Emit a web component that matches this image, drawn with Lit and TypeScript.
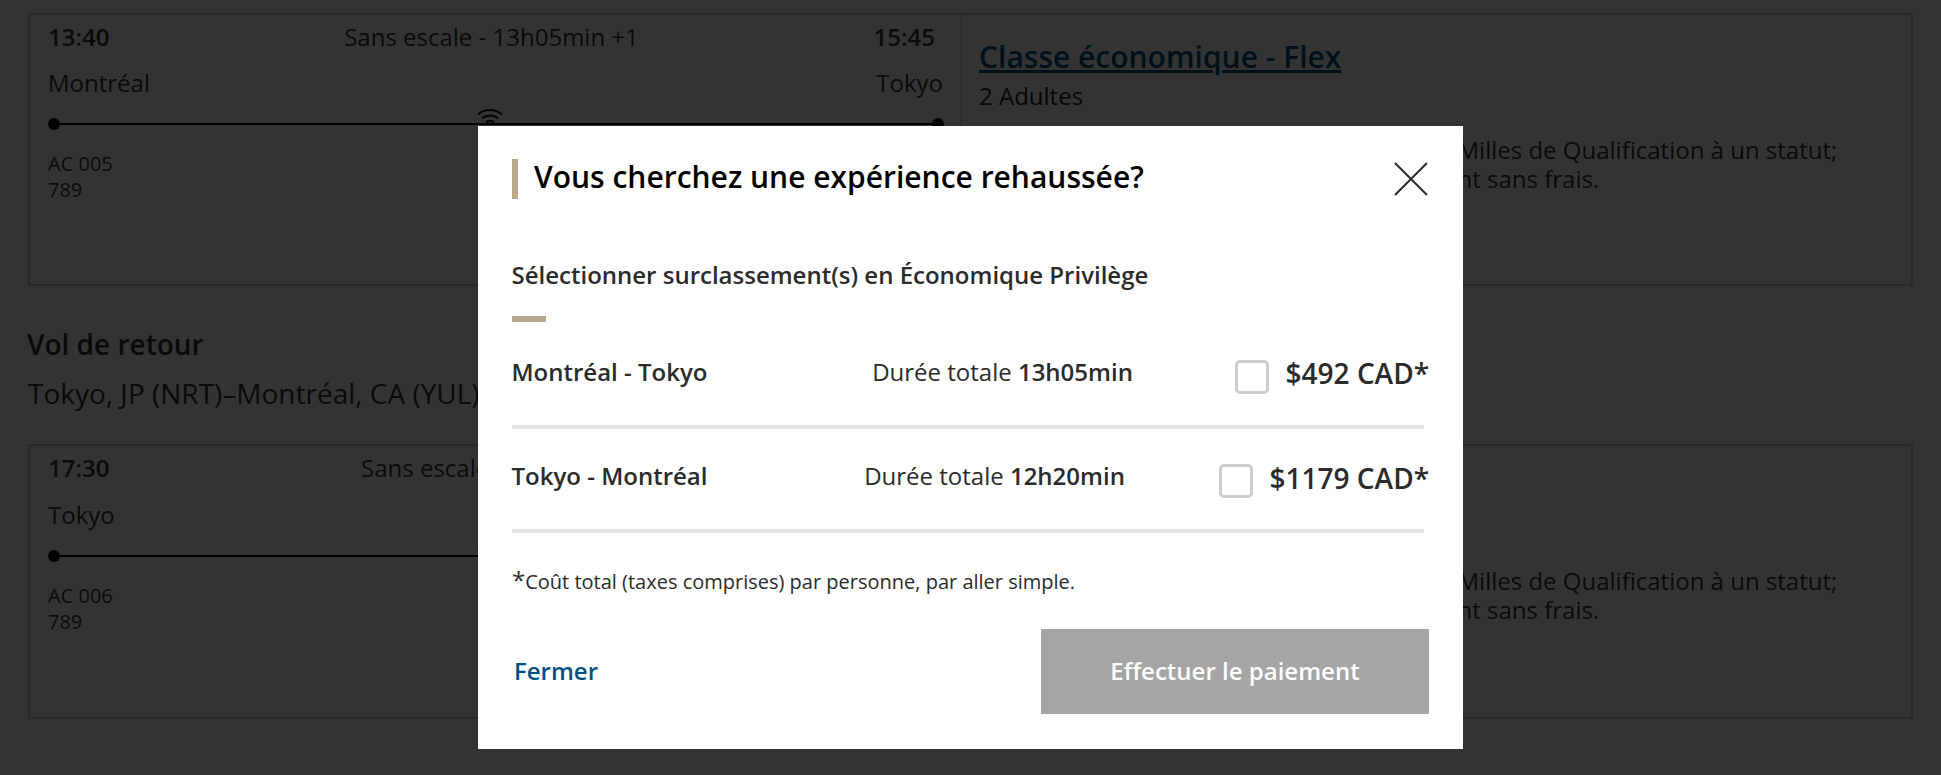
import { LitElement, html, css, svg } from "lit";
import { customElement } from "lit/decorators.js";

const wifi = svg`<svg class="wifi" viewBox="0 0 26 16" width="26" height="16" fill="none" stroke="#0d0d0d" stroke-width="2"><path d="M1 6.5C7.5 .5 18.5 .5 25 6.5"/><path d="M5 10.5C9.5 6.5 16.5 6.5 21 10.5"/><path d="M9 14.5C11.5 12.5 14.5 12.5 17 14.5"/></svg>`;

@customElement("app-root")
export class AppRoot extends LitElement {
  static styles = css`
    :host { display: block; position: relative; height: 775px; overflow: hidden; background: #fff; color: #333;
      font-family: "Open Sans", "Liberation Sans", sans-serif; }
    * { box-sizing: border-box; }
    .page { padding: 13px 28px 0; }
    .card { display: grid; grid-template-columns: 932px 1fr; height: 273px; border: 2px solid #ccc; }
    .card.later { height: 275px; }
    .flight { padding: 7px 17px 0 18px; border-right: 2px solid #ddd; }
    .top { display: grid; grid-template-columns: 1fr auto 1fr; font-size: 24px; line-height: 30px; padding-right: 8px; }
    .top b { font-weight: 600; }
    .top .dep { text-align: left; }
    .top .arr { text-align: right; }
    .cities { display: flex; justify-content: space-between; font-size: 24px; line-height: 30px; margin-top: 16px; }
    .later .cities { margin-top: 17px; }
    .track { position: relative; height: 2px; background: #000; margin: 25px 5px 0 6px; }
    .dot { position: absolute; top: -5px; width: 12px; height: 12px; border-radius: 50%; background: #000; }
    .dot.l { left: -6px; } .dot.r { right: -6px; }
    .wifi { position: absolute; left: 423px; top: -15px; }
    .num { font-size: 20px; line-height: 26px; margin-top: 26px; }
    .fare { padding: 22px 16px 0 17px; }
    .fare a { display: block; font-size: 30px; line-height: 40px; font-weight: 600; color: #00507f; text-decoration: underline; }
    .fare .pax { font-size: 24px; line-height: 32px; color: #222; margin-top: 3px; }
    .perks { font-size: 24px; line-height: 29px; margin-top: 23px; white-space: nowrap; }
    .perks span { display: inline-block; text-align: right; }
    .perks .a { width: 478.5px; }
    .perks .b { width: 478.5px; }
    h2 { font-size: 28px; line-height: 36px; font-weight: 600; margin: 40px 0 0 -1px; color: #333; }
    .route { font-size: 28px; line-height: 38px; margin: 12px 0 32px; }
    .overlay { position: absolute; inset: 0; background: rgba(0,0,0,.8); display: flex; justify-content: center; align-items: flex-start; padding-top: 126px; }
    .modal { width: 985px; height: 623px; background: #fff; padding: 33px 35px 0 34px; color: #2b2b2b; }
    .head { display: flex; justify-content: space-between; align-items: center; height: 40px; }
    .head h1 { margin: 0; height: 40px; font-size: 30px; line-height: 36px; font-weight: 600; color: #000; border-left: 6px solid #b9a88f; padding: 0 0 4px 16px; white-space: nowrap; }
    .close { display: block; width: 34px; height: 34px; background: none; border: 0; padding: 0; }
    .sub { font-size: 24px; line-height: 34px; font-weight: 600; margin: 59px 0 0 -0.5px; }
    .rule { width: 34px; height: 6px; background: #b9a88f; margin-top: 24px; }
    .row { display: flex; align-items: center; border-bottom: 4px solid #e5e5e5; margin-right: 4px; height: 104px; padding-bottom: 7px; }
    .first { height: 107px; padding-bottom: 4px; }
    .name { width: 259px; font-size: 24px; font-weight: 600; margin-left: -0.5px; }
    .dur { flex: 1; text-align: center; font-size: 24px; }
    .dur b { font-weight: 600; }
    .pick { display: flex; align-items: center; gap: 17px; margin-right: -5px; }
    .box { width: 34px; height: 34px; border: 3px solid #ccc; border-radius: 5px; background: #fff; margin-top: 10px; }
    .price { font-size: 28px; font-weight: 600; margin-top: 2px; }
    .row:not(.first) .price { margin-top: 4px; }
    .note { font-size: 20px; line-height: 30px; margin: 34px 0 0; }
    .note i { font-style: normal; font-size: 24px; line-height: 20px; }
    .foot { display: flex; justify-content: space-between; align-items: center; margin-top: 32px; }
    .foot a { font-size: 24px; font-weight: 600; color: #00507f; margin: -2px 0 0 2px; }
    .pay { width: 388px; height: 85px; border: 0; padding: 0 0 2px; background: #a5a5a5; color: #fff; font: 600 24px "Open Sans", sans-serif; margin-right: -1px; }
  `;

  private card(t1: string, mid: string, t2: string, from: string, to: string, num: string, later = false) {
    return html`<section class="card ${later ? "later" : ""}">
      <div class="flight">
        <div class="top"><b class="dep">${t1}</b><span>${mid}</span><b class="arr">${t2}</b></div>
        <div class="cities"><span>${from}</span><span>${to}</span></div>
        <div class="track"><i class="dot l"></i>${wifi}<i class="dot r"></i></div>
        <div class="num">${num}<br />789</div>
      </div>
      <div class="fare">
        <a href="#">Classe économique - Flex</a>
        <div class="pax">2 Adultes</div>
        <div class="perks"><span class="a">des points Aéroplan et des </span>Milles de Qualification à un statut;<br /><span class="b">Changement </span>nt sans frais.</div>
      </div>
    </section>`;
  }

  render() {
    return html`
      <div class="page">
        ${this.card("13:40", "Sans escale - 13h05min +1", "15:45", "Montréal", "Tokyo", "AC 005")}
        <h2>Vol de retour</h2>
        <div class="route">Tokyo, JP (NRT)–Montréal, CA (YUL)</div>
        ${this.card("17:30", "Sans escale - 12h20min", "15:50", "Tokyo", "Montréal", "AC 006", true)}
      </div>
      <div class="overlay">
        <div class="modal">
          <div class="head">
            <h1>Vous cherchez une expérience rehaussée?</h1>
            <button class="close" aria-label="Fermer">
              <svg viewBox="0 0 34 34" width="34" height="34" fill="none" stroke="#2b2b2b" stroke-width="2"><path d="M1 1L33 33M33 1L1 33"/></svg>
            </button>
          </div>
          <div class="sub">Sélectionner surclassement(s) en Économique Privilège</div>
          <div class="rule"></div>
          <div class="row first">
            <div class="name">Montréal - Tokyo</div>
            <div class="dur">Durée totale <b>13h05min</b></div>
            <div class="pick"><span class="box"></span><span class="price">$492 CAD*</span></div>
          </div>
          <div class="row">
            <div class="name">Tokyo - Montréal</div>
            <div class="dur">Durée totale <b>12h20min</b></div>
            <div class="pick"><span class="box"></span><span class="price">$1179 CAD*</span></div>
          </div>
          <div class="note"><i>*</i>Coût total (taxes comprises) par personne, par aller simple.</div>
          <div class="foot">
            <a>Fermer</a>
            <button class="pay">Effectuer le paiement</button>
          </div>
        </div>
      </div>
    `;
  }
}
